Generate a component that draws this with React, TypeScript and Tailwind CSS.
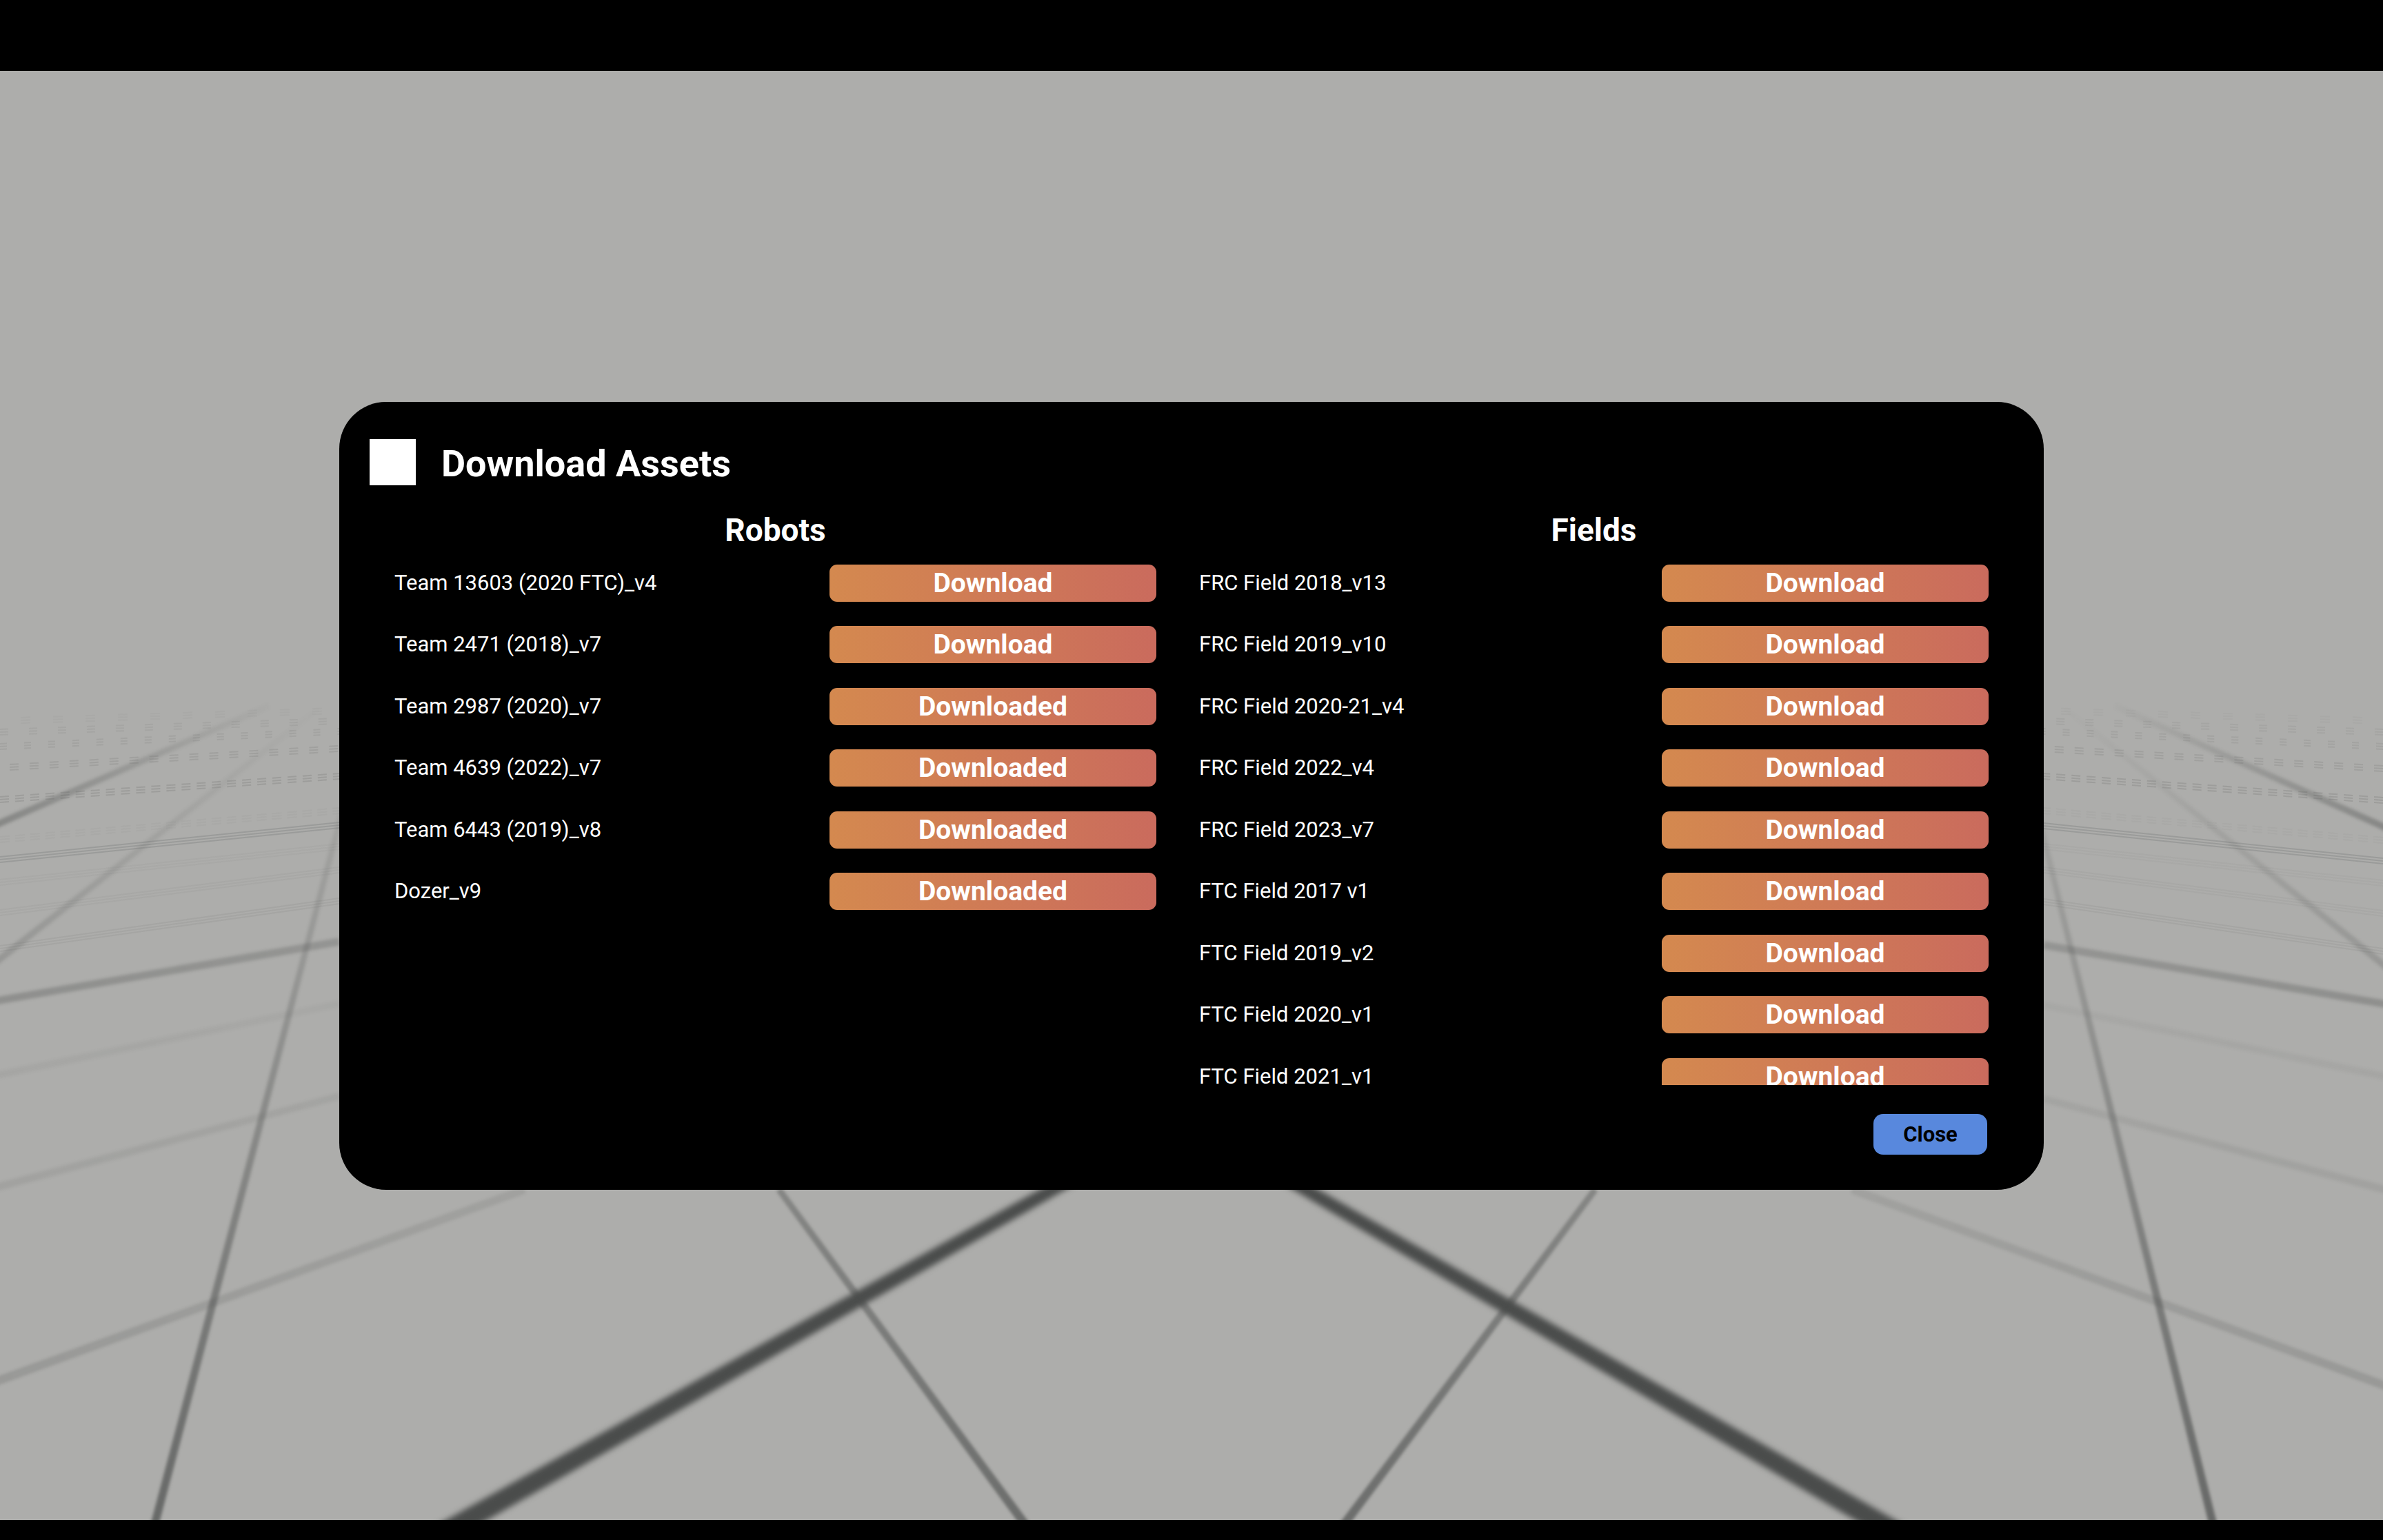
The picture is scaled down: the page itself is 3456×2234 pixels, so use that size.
type Asset = { name: string; downloaded?: boolean };

const robots: Asset[] = [
  { name: "Team 13603 (2020 FTC)_v4" },
  { name: "Team 2471 (2018)_v7" },
  { name: "Team 2987 (2020)_v7", downloaded: true },
  { name: "Team 4639 (2022)_v7", downloaded: true },
  { name: "Team 6443 (2019)_v8", downloaded: true },
  { name: "Dozer_v9", downloaded: true },
];

const fields: Asset[] = [
  { name: "FRC Field 2018_v13" },
  { name: "FRC Field 2019_v10" },
  { name: "FRC Field 2020-21_v4" },
  { name: "FRC Field 2022_v4" },
  { name: "FRC Field 2023_v7" },
  { name: "FTC Field 2017 v1" },
  { name: "FTC Field 2019_v2" },
  { name: "FTC Field 2020_v1" },
  { name: "FTC Field 2021_v1" },
];

// A floor line seen in perspective: two ends with their own width and opacity.
type FloorLine = {
  x1: number;
  y1: number;
  w1: number;
  o1: number;
  x2: number;
  y2: number;
  w2: number;
  o2: number;
};

const line = (
  x1: number, y1: number, w1: number, o1: number,
  x2: number, y2: number, w2: number, o2: number,
): FloorLine => ({ x1, y1, w1, o1, x2, y2, w2, o2 });

const heavyLines = [
  line(677, 2205, 30, 1, 1526, 1726, 18, 1),
  line(2719, 2205, 30, 1, 1894, 1726, 18, 1),
];

const thinLines = [
  line(226, 2205, 12, 0.7, 497, 1175, 8, 0.1),
  line(3208, 2205, 12, 0.7, 2955, 1180, 8, 0.1),
  line(1482, 2205, 12, 0.65, 1130, 1726, 8, 0.4),
  line(1954, 2205, 12, 0.65, 2313, 1726, 8, 0.4),
  line(0, 2002, 11, 0.2, 760, 1726, 10, 0.12),
  line(3456, 2009, 11, 0.2, 2687, 1726, 10, 0.12),
  line(0, 1721, 11, 0.11, 492, 1590, 10, 0.09),
  line(3456, 1725, 11, 0.11, 2964, 1594, 10, 0.09),
  line(0, 1559, 10, 0.07, 492, 1456, 9, 0.05),
  line(3456, 1561, 10, 0.07, 2964, 1458, 9, 0.05),
  line(0, 1451, 11, 0.3, 492, 1366, 11, 0.25),
  line(3456, 1456, 11, 0.3, 2964, 1371, 11, 0.25),
  line(0, 1391, 10, 0.22, 467, 1024, 7, 0),
  line(3456, 1399, 10, 0.22, 2990, 1024, 7, 0),
  line(0, 1194, 10, 0.38, 390, 1024, 8, 0.02),
  line(3456, 1199, 10, 0.38, 3067, 1024, 8, 0.02),
];

// Far rows of the grid, which break up into triple hairlines and dashes.
type FarRow = { x1: number; y1: number; x2: number; y2: number; o: number; dash?: string };

const farRows: FarRow[] = [
  { x1: 0, y1: 1376, x2: 492, y2: 1307, o: 0.07 },
  { x1: 3456, y1: 1380, x2: 2964, y2: 1308, o: 0.07 },
  { x1: 0, y1: 1324, x2: 492, y2: 1262, o: 0.05 },
  { x1: 3456, y1: 1325, x2: 2964, y2: 1262, o: 0.05 },
  { x1: 0, y1: 1280, x2: 492, y2: 1228, o: 0.04 },
  { x1: 3456, y1: 1281, x2: 2964, y2: 1228, o: 0.04 },
  { x1: 0, y1: 1247, x2: 492, y2: 1197, o: 0.18 },
  { x1: 3456, y1: 1249, x2: 2964, y2: 1198, o: 0.18 },
  { x1: 0, y1: 1218, x2: 492, y2: 1176, o: 0.03, dash: "14 8" },
  { x1: 3456, y1: 1219, x2: 2964, y2: 1176, o: 0.03, dash: "14 8" },
  { x1: 0, y1: 1160, x2: 492, y2: 1126, o: 0.16, dash: "13 9" },
  { x1: 3456, y1: 1161, x2: 2964, y2: 1126, o: 0.16, dash: "13 9" },
  { x1: 14, y1: 1113, x2: 492, y2: 1086, o: 0.13, dash: "13 16" },
  { x1: 3456, y1: 1115, x2: 2964, y2: 1086, o: 0.13, dash: "13 16" },
  { x1: 0, y1: 1083, x2: 492, y2: 1061, o: 0.1, dash: "10 25" },
  { x1: 3456, y1: 1083, x2: 2964, y2: 1061, o: 0.1, dash: "10 25" },
  { x1: 0, y1: 1062, x2: 492, y2: 1046, o: 0.07, dash: "12 30" },
  { x1: 3456, y1: 1062, x2: 2964, y2: 1046, o: 0.07, dash: "12 30" },
  { x1: 30, y1: 1045, x2: 492, y2: 1031, o: 0.03, dash: "14 33" },
  { x1: 3426, y1: 1045, x2: 2964, y2: 1031, o: 0.03, dash: "14 33" },
];

function outline({ x1, y1, w1, x2, y2, w2 }: FloorLine) {
  const length = Math.hypot(x2 - x1, y2 - y1);
  const nx = -(y2 - y1) / length / 2;
  const ny = (x2 - x1) / length / 2;
  const ex = ((x2 - x1) / length) * 60;
  const ey = ((y2 - y1) / length) * 60;
  return [
    [x1 - ex + nx * w1, y1 - ey + ny * w1],
    [x2 + nx * w2, y2 + ny * w2],
    [x2 - nx * w2, y2 - ny * w2],
    [x1 - ex - nx * w1, y1 - ey - ny * w1],
  ]
    .map((point) => point.join(","))
    .join(" ");
}

function Lines({ id, lines }: { id: string; lines: FloorLine[] }) {
  return (
    <>
      {lines.map((item, index) => (
        <g key={index}>
          <linearGradient
            id={`${id}-${index}`}
            gradientUnits="userSpaceOnUse"
            x1={item.x1}
            y1={item.y1}
            x2={item.x2}
            y2={item.y2}
          >
            <stop offset="0" stopColor="#4a4c4b" stopOpacity={item.o1} />
            <stop offset="1" stopColor="#4a4c4b" stopOpacity={item.o2} />
          </linearGradient>
          <polygon
            points={outline(item)}
            fill={`url(#${id}-${index})`}
            stroke={item.y2 === 1726 ? `url(#${id}-${index})` : "none"}
          />
        </g>
      ))}
    </>
  );
}

function FloorGrid() {
  return (
    <svg
      className="absolute inset-0 h-full w-full"
      viewBox="0 103 3456 2102"
      preserveAspectRatio="xMidYMid slice"
      aria-hidden="true"
    >
      <filter id="soft-heavy" filterUnits="userSpaceOnUse" x="0" y="103" width="3456" height="2140" colorInterpolationFilters="sRGB">
        <feGaussianBlur stdDeviation="4" />
      </filter>
      <filter id="soft-thin" filterUnits="userSpaceOnUse" x="-20" y="103" width="3496" height="2140" colorInterpolationFilters="sRGB">
        <feGaussianBlur stdDeviation="2" />
      </filter>
      <g stroke="#4a4c4b" strokeWidth="2">
        {farRows.map((row, index) => (
          <g key={index} strokeOpacity={row.o} strokeDasharray={row.dash}>
            {[-4, 0, 4].map((dy) => (
              <line key={dy} x1={row.x1} y1={row.y1 + dy} x2={row.x2} y2={row.y2 + dy} />
            ))}
          </g>
        ))}
      </g>
      <g filter="url(#soft-thin)">
        <Lines id="thin" lines={thinLines} />
      </g>
      <g filter="url(#soft-heavy)">
        <Lines
          id="heavy"
          lines={heavyLines.map((item) => ({
            ...item,
            // Carried on under the dialog so that its edge cuts them cleanly.
            x2: item.x2 + (item.x2 - item.x1) / 16,
            y2: item.y2 + (item.y2 - item.y1) / 16,
          }))}
        />
      </g>
    </svg>
  );
}

function AssetColumn({ title, assets }: { title: string; assets: Asset[] }) {
  return (
    <section>
      <h2 className="mb-5 text-center text-[46px] leading-[60px] font-bold">{title}</h2>
      <ul className="grid h-[770px] grid-rows-[repeat(9,54px)] content-between">
        {assets.map((asset) => (
          <li key={asset.name} className="flex items-center justify-between">
            <span className="text-[31px] leading-[54px]">{asset.name}</span>
            <button
              type="button"
              aria-label={`${asset.downloaded ? "Downloaded" : "Download"} ${asset.name}`}
              className="h-[54px] w-[474px] rounded-[11px] bg-linear-to-r/srgb from-[#d4894f] to-[#ca6b5d] text-[39px] leading-[54px] font-bold"
            >
              {asset.downloaded ? "Downloaded" : "Download"}
            </button>
          </li>
        ))}
      </ul>
    </section>
  );
}

export default function App() {
  return (
    <main className="relative flex min-h-screen items-center border-t-[103px] border-b-[29px] border-black bg-[#adadab] px-[492px] font-['Roboto',sans-serif] text-white">
      <FloorGrid />
      <div
        role="dialog"
        aria-labelledby="dialog-title"
        className="relative flex-1 rounded-[68px] bg-black pt-[54px] pb-[51px]"
      >
        <header className="mb-[30px] flex items-start gap-[37px] px-11">
          <div className="size-[67px] bg-white" />
          <h1 id="dialog-title" className="text-[54px] leading-[72px] font-bold">
            Download Assets
          </h1>
        </header>
        <div className="grid max-h-[835px] grid-cols-[1105fr_1145fr] gap-x-[62px] overflow-hidden px-20">
          <AssetColumn title="Robots" assets={robots} />
          <AssetColumn title="Fields" assets={fields} />
        </div>
        <footer className="mt-[42px] flex justify-end px-[82px]">
          <button
            type="button"
            className="h-[59px] w-[165px] rounded-[14px] bg-[#5888dd] text-[31px] leading-[59px] font-bold text-black"
          >
            Close
          </button>
        </footer>
      </div>
    </main>
  );
}
